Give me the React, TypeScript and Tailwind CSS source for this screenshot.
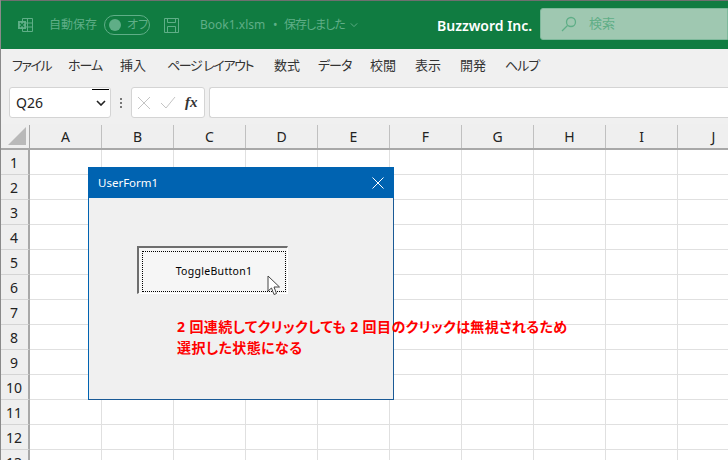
const jp = "font-['Noto_Sans','Noto_Sans_CJK_JP',sans-serif] [font-feature-settings:'palt']";
const cols = ["A", "B", "C", "D", "E", "F", "G", "H", "I", "J"];
const rows = Array.from({ length: 13 }, (_, i) => i + 1);
const tabs: [string, string][] = [
  ["ファイル", "w-[56px] tracking-[-1.5px]"], ["ホーム", "w-[52px] tracking-[-1px]"], ["挿入", "w-[47px]"], ["ページ レイアウト", "w-[107px] tracking-[-1.4px]"],
  ["数式", "w-[44px]"], ["データ", "w-[52px] tracking-[-1px]"], ["校閲", "w-[45px]"], ["表示", "w-[45px]"], ["開発", "w-[45px]"], ["ヘルプ", "w-[60px] tracking-[-1px]"],
];

function ExcelIcon() {
  return (
    <svg width="18" height="18" viewBox="0 0 18 18" fill="none" stroke="#5fae87" strokeWidth="1">
      <path d="M5.5 2.5h10v13h-10zM10.5 2.5v13M5.5 7h10M5.5 11h10" />
      <rect x="1" y="5" width="8" height="8" fill="#5fae87" stroke="none" />
      <path d="M3 7l4 4M7 7l-4 4" stroke="#107c41" strokeWidth="1.2" />
    </svg>
  );
}
function SaveIcon() {
  return (
    <svg width="17" height="17" viewBox="0 0 17 17" fill="none" stroke="#5fae87" strokeWidth="1">
      <path d="M1.5 1.5h14v14h-14zM4.5 1.5v4h8v-4M4.5 15.5v-6h8v6" />
    </svg>
  );
}

export default function App() {
  return (
    <div className={`relative w-[728px] h-[460px] overflow-hidden bg-white ${jp}`}>
      <div className="h-px bg-[#6f6f6f]" />
      <div className="flex h-[48px] items-center bg-[#107c41]">
        <div className="ml-[17px] w-[18px]"><ExcelIcon /></div>
        <span className="ml-[14px] w-[48px] whitespace-nowrap text-[12px] text-[#5fae87]">自動保存</span>
        <div className="ml-[7px] flex h-[20px] w-[46px] items-center rounded-full border border-[#5fae87] pl-[4px]">
          <div className="h-[12px] w-[12px] rounded-full bg-[#5fae87]" />
          <span className="ml-[6px] whitespace-nowrap text-[12px] leading-none text-[#5fae87]">オフ</span>
        </div>
        <div className="ml-[13px] w-[17px]"><SaveIcon /></div>
        <span className="ml-[20px] w-[73px] whitespace-nowrap text-[12px] text-[#5fae87]">Book1.xlsm</span>
        <span className="w-[11px] text-[12px] text-[#5fae87]">•</span>
        <span className="w-[66px] whitespace-nowrap text-[12px] tracking-[-1px] text-[#5fae87]">保存しました</span>
        <svg className="w-[8px]" width="8" height="6" viewBox="0 0 10 6" fill="none" stroke="#5fae87" strokeWidth="1.2"><path d="M1 1l4 4 4-4" /></svg>
        <span className="ml-[79px] w-[103px] whitespace-nowrap text-[14px] font-semibold text-white">Buzzword Inc.</span>
        <div className="mb-[2px] flex h-[32px] flex-1 items-center rounded-l-[3px] border border-[#7db99b] bg-[#9fc8b1] pl-[20px]">
          <svg width="16" height="16" viewBox="0 0 16 16" fill="none" stroke="#5fae87" strokeWidth="1.3"><circle cx="10" cy="6" r="4.5" /><path d="M6.5 9.5L1 15" /></svg>
          <span className="ml-[12px] text-[13px] text-[#5fae87]">検索</span>
        </div>
      </div>
      <div className="flex h-[38px] items-center bg-[#f0f0f0] pb-[4px] pl-[12px] text-[13px] text-[#333]">
        {tabs.map(([t, w]) => <span key={t} className={`${w} whitespace-nowrap`}>{t}</span>)}
      </div>
      <div className="flex h-[37px] bg-[#f0f0f0] pb-[6px] pl-[9px]">
        <div className="relative flex w-[102px] items-center justify-between rounded-[3px] border border-[#d4d4d4] bg-white pl-[6px] pr-[4px] text-[14px] text-[#222]">
          <span>Q26</span>
          <svg width="10" height="6" viewBox="0 0 10 6" fill="none" stroke="#222" strokeWidth="1.6"><path d="M1 1l4 4 4-4" /></svg>
          <div className="absolute right-[1px] top-[1px] h-px w-[17px] bg-black" />
        </div>
        <div className="flex w-[20px] flex-col items-center justify-center gap-[2px]">
          <i className="h-[2px] w-[2px] bg-[#777]" /><i className="h-[2px] w-[2px] bg-[#777]" /><i className="h-[2px] w-[2px] bg-[#777]" />
        </div>
        <div className="flex w-[74px] items-center rounded-[3px] border border-[#d4d4d4] bg-white pl-[5px]">
          <svg width="14" height="14" viewBox="0 0 14 14" fill="none" stroke="#c4c4c4" strokeWidth="1"><path d="M1 1l12 12M13 1L1 13" /></svg>
          <svg className="ml-[9px]" width="16" height="13" viewBox="0 0 16 13" fill="none" stroke="#c4c4c4" strokeWidth="1"><path d="M1 7l5 5L15 1" /></svg>
          <span className="ml-[9px] font-['Liberation_Serif',serif] text-[15px] font-bold italic leading-none text-[#333]">fx</span>
        </div>
        <div className="ml-[4px] flex-1 rounded-l-[3px] border border-r-0 border-[#d4d4d4] bg-white" />
      </div>
      <div className="flex h-[26px] border-b-2 border-[#a8a8a8] bg-[#efefef] pt-px text-[14px] text-[#222]">
        <div className="relative w-[30px] shrink-0 border-r border-[#a8a8a8]">
          <svg className="absolute bottom-[3px] right-[3px]" width="18" height="18"><path d="M18 0V18H0Z" fill="#b9b9b9" /></svg>
        </div>
        {cols.map((c) => (
          <div key={c} className="flex w-[72px] shrink-0 items-center justify-center border-r border-[#c0c0c0]">{c}</div>
        ))}
      </div>
      {rows.map((r) => (
        <div key={r} className="flex h-[25px] text-[14px] text-[#222]">
          <div className="flex w-[30px] shrink-0 items-center justify-center border-b border-r-2 border-b-[#d4d4d4] border-r-[#a8a8a8] bg-[#efefef]">{r}</div>
          {cols.map((c) => <div key={c} className="w-[72px] shrink-0 border-b border-r border-[#e0e0e0]" />)}
        </div>
      ))}
      <div className="absolute left-0 top-0 h-full w-px bg-[#8a8a8a]" />

      <div className="absolute left-[88px] top-[167px] flex h-[233px] w-[306px] flex-col border border-[#0063b1] border-b-[#1a5a96] border-r-[#1a5a96] bg-[#f0f0f0]">
        <div className="-m-px mb-0 flex h-[31px] items-center justify-between bg-[#0063b1] pl-[10px] pr-[10px]">
          <span className="text-[11.5px] text-white">UserForm1</span>
          <svg width="12" height="12" viewBox="0 0 12 12" fill="none" stroke="#fff" strokeWidth="1"><path d="M.5.5l11 11M11.5.5l-11 11" /></svg>
        </div>
        <div className="relative flex-1">
          <div className="ml-[48px] mt-[48px] h-[48px] w-[151px] border-b border-l-2 border-r border-t-2 border-b-white border-l-[#6e6e6e] border-r-white border-t-[#6e6e6e] bg-[#f6f6f6] pb-px pl-[3px] pr-px pt-[3px]">
            <div className="flex h-full items-center justify-center border border-dotted border-black text-[10.5px] tracking-[0.3px] text-black">
              ToggleButton1
            </div>
          </div>
          <svg className="absolute left-[178px] top-[77px]" width="14" height="21" viewBox="0 0 14 21">
            <path d="M1 1V16L4.5 13L7 19.5L9.5 18.5L7 12H12.5Z" fill="#fff" stroke="#444" strokeWidth="1" />
          </svg>
          <div className="absolute left-[88px] top-[118px] w-[420px] text-[14px] font-bold leading-[21px] tracking-[0.4px] text-[#ff0000]">
            <div className="whitespace-nowrap">2 回連続してクリックしても 2 回目のクリックは無視されるため</div>
            <div className="whitespace-nowrap">選択した状態になる</div>
          </div>
        </div>
      </div>
    </div>
  );
}
